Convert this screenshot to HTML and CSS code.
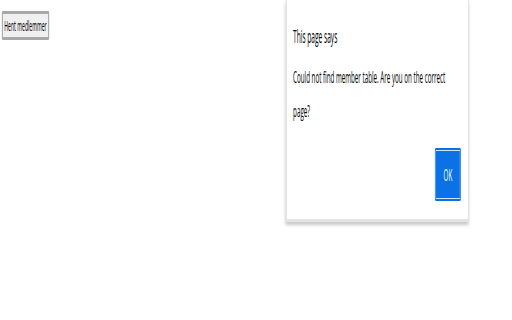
FILE: index.html
```html
<!DOCTYPE html>
<html>
<head>
<meta charset="utf-8">
<link rel="stylesheet" href="styles.css">
</head>
<body>
<div class="page">
  <button class="fetch">Hent medlemmer</button>
  <div class="dialog">
    <div class="title">This page says</div>
    <div class="message">Could not find member table. Are you on the correct page?</div>
    <div class="actions"><button class="ok">OK</button></div>
  </div>
</div>
</body>
</html>
```
FILE: styles.css
```css
:root { --s: 0.367; }
html, body { margin: 0; padding: 0; background: #fff; overflow: hidden; width: 512px; height: 320px; }
.page {
  position: relative;
  width: calc(512px / var(--s));
  height: 320px;
  transform: scaleX(var(--s));
  transform-origin: 0 0;
  font-family: "Open Sans", sans-serif;
  padding: 11px 0 0 calc(2px / var(--s));
  box-sizing: border-box;
}
.fetch {
  display: block;
  width: calc(47px / var(--s));
  height: 29px;
  padding: 0;
  white-space: nowrap;
  font-family: "Open Sans", sans-serif;
  font-size: 14px;
  color: #000;
  background: #f0f0f0;
  border: 3px solid #a8a8a8;
  border-radius: 2px;
}
.dialog {
  position: absolute;
  left: calc(286px / var(--s));
  top: 0;
  width: calc(183px / var(--s));
  height: 222px;
  box-sizing: border-box;
  background: #fff;
  border: 3px solid #e4e4e4;
  border-top: none;
  box-shadow: 0 3px 5px rgba(0,0,0,0.22);
  padding: 24px calc(7px / var(--s)) 0 calc(6px / var(--s));
  display: flex;
  flex-direction: column;
  color: #000;
}
.title { font-size: 18px; line-height: 24px; }
.message { font-size: 17px; line-height: 34px; margin-top: 12px; }
.actions { display: flex; justify-content: flex-end; margin-top: 20px; }
.ok {
  width: calc(26px / var(--s));
  height: 53px;
  background: #0a72e6;
  color: #fff;
  font-family: "Open Sans", sans-serif;
  font-size: 17px;
  border: none;
  border-radius: 3px;
  box-shadow: inset 0 0 0 2px #0a72e6, inset 0 0 0 3px #cfe3fb;
  padding: 0;
}
```
